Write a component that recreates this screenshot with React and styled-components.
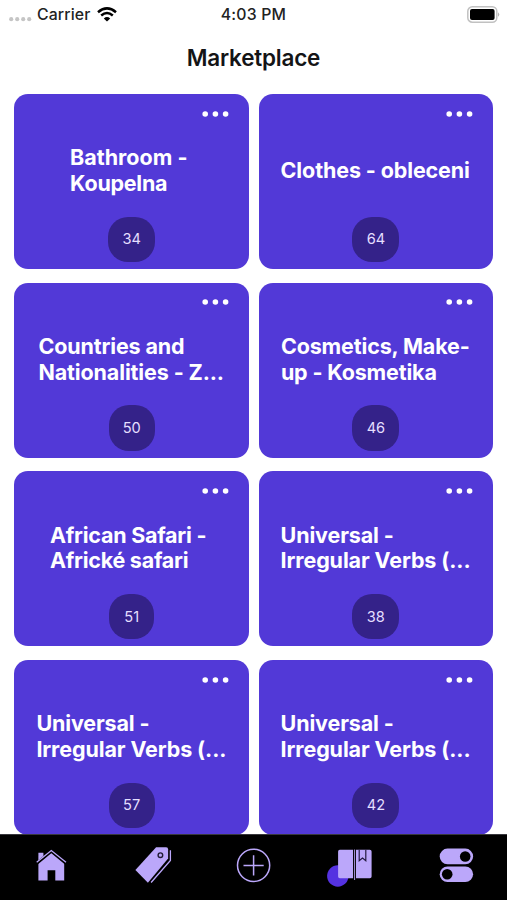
import React from "react";
import styled, { createGlobalStyle } from "styled-components";

const GlobalStyle = createGlobalStyle`
  * { box-sizing: border-box; }
  body { margin: 0; background: #fff; }
`;

const Screen = styled.div`
  width: 507px;
  height: 900px;
  overflow: hidden;
  display: flex;
  flex-direction: column;
  background: #fff;
  font-family: Inter, "Liberation Sans", sans-serif;
`;

const StatusBar = styled.div`
  height: 29px;
  flex: none;
  display: grid;
  grid-template-columns: 1fr auto 1fr;
  align-items: center;
  padding: 0 7px 1px 9px;
  color: #222;
  font-size: 16px;
  line-height: 20px;
`;

const Carrier = styled.div`
  display: flex;
  align-items: center;
  svg { display: block; }
  svg:first-child { transform: translateY(1px); }
  span { margin: 2px 7px 0 5px; font-weight: 500; font-size: 15.8px; letter-spacing: 0.12px; }
`;

const Clock = styled.span`
  margin-top: 2px;
  font-weight: 500;
  font-size: 15.8px;
  letter-spacing: 0.2px;
  transform: translateX(-1px);
`;

const BatteryIcon = styled.svg`
  display: block;
  justify-self: end;
`;

const Header = styled.h1`
  flex: none;
  height: 65px;
  margin: 0;
  padding-top: 14px;
  text-align: center;
  font-size: 22.5px;
  font-weight: 600;
  line-height: 30px;
  letter-spacing: -0.22px;
  color: #141416;
`;

const Grid = styled.main`
  flex: none;
  height: 740px;
  overflow: hidden;
  display: grid;
  grid-template-columns: 234.6px 234.6px;
  grid-auto-rows: 175px;
  gap: 13.7px 9.6px;
  padding-left: 14.4px;
  align-content: start;
`;

const Card = styled.article`
  display: grid;
  grid-template-rows: 39px 76px auto;
  border-radius: 14px;
  background: #5239d7;
  color: #fff;
`;

const MoreButton = styled.div`
  display: flex;
  justify-content: flex-end;
  padding: 16.6px 20px 0 0;
  svg { display: block; }
`;

const Title = styled.h2`
  margin: 0;
  padding-left: ${(p) => p.$indent}px;
  display: flex;
  flex-direction: column;
  justify-content: center;
  font-size: 21.5px;
  font-weight: 700;
  line-height: 25.6px;
  white-space: nowrap;
`;

const Line = styled.span`
  letter-spacing: ${(p) => p.$tracking}px;
`;

const Count = styled.div`
  justify-self: center;
  margin-top: 7.6px;
  width: ${(p) => p.$width}px;
  height: 45.4px;
  border-radius: 20px;
  display: flex;
  align-items: center;
  justify-content: center;
  background: #342289;
  color: #e5dfff;
  font-size: 14.6px;
`;

const TabBar = styled.nav`
  flex: 1;
  display: grid;
  grid-template-columns: repeat(5, 1fr);
  border-top: 1px solid #38373d;
  background: #000;
`;

const Tab = styled.div`
  display: flex;
  justify-content: center;
  svg { display: block; width: 101px; height: 64px; }
`;

const universal = { lines: [["Universal -", -0.14], ["Irregular Verbs (...", -0.11]], indent: 22 };

const cards = [
  { lines: [["Bathroom -", 0], ["Koupelna", -0.25]], indent: 55.7, count: 34, width: 47 },
  { lines: [["Clothes - obleceni", -0.12]], indent: 22, count: 64, width: 47 },
  { lines: [["Countries and", -0.14], ["Nationalities - Z...", -0.12]], indent: 24, count: 50, width: 46 },
  { lines: [["Cosmetics, Make-", -0.14], ["up - Kosmetika", -0.16]], indent: 22.3, count: 46, width: 47 },
  { lines: [["African Safari -", -0.24], ["Africké safari", -0.24]], indent: 35.7, count: 51, width: 44.5 },
  { ...universal, count: 38, width: 47 },
  { ...universal, count: 57, width: 46 },
  { ...universal, count: 42, width: 47 },
];

const LILAC = "#bba7fa";

function DeckCard({ lines, indent, count, width }) {
  return (
    <Card>
      <MoreButton>
        <svg width="27" height="6" viewBox="0 0 27 6" fill="#fff">
          <circle cx="3.2" cy="3" r="2.8" /><circle cx="13.4" cy="3" r="2.8" /><circle cx="23.6" cy="3" r="2.8" />
        </svg>
      </MoreButton>
      <Title $indent={indent}>
        {lines.map(([text, tracking]) => <Line key={text} $tracking={tracking}>{text}</Line>)}
      </Title>
      <Count $width={width}>{count}</Count>
    </Card>
  );
}

function Status() {
  return (
    <StatusBar>
      <Carrier>
        <svg width="23" height="20" viewBox="0 0 23 20" fill="#c5c5c5">
          <circle cx="2.2" cy="14.2" r="2.1" /><circle cx="8.2" cy="14.2" r="2.1" />
          <circle cx="14.2" cy="14.2" r="2.1" /><circle cx="20.2" cy="14.2" r="2.1" />
        </svg>
        <span>Carrier</span>
        <svg width="20" height="15" viewBox="0 0 20 15" fill="none" stroke="#000" strokeWidth="2.5">
          <path d="M1 5.2Q10-2.4 19 5.2M4.2 8.5Q10 3.6 15.8 8.5" />
          <path d="M6.8 11.4Q10 8.8 13.2 11.4L10 14.6Z" fill="#000" stroke="none" />
        </svg>
      </Carrier>
      <Clock>4:03 PM</Clock>
      <BatteryIcon width="33" height="17" viewBox="0 0 33 17">
        <rect x=".8" y=".8" width="29" height="15.4" rx="4.5" fill="#fff" stroke="#c1c1c1" strokeWidth="1.5" />
        <rect x="3" y="3" width="24.6" height="11" rx="2" fill="#000" />
        <path d="M31 6.2Q33.5 8.5 31 10.8Z" fill="#b4b4b4" />
      </BatteryIcon>
    </StatusBar>
  );
}

function Tabs() {
  return (
    <TabBar>
      <Tab>
        <svg viewBox="0 835 101 64" fill={LILAC}>
          <path d="M38.4 862.5 51.3 852.6 64.2 862.5V880.6H55.3V870.2H47.6V880.6H38.4Z" />
          <path d="M36.8 864 51.3 852.2 65.9 864" fill="none" stroke="#000" strokeWidth="1.7" />
          <path d="M38.4 852.7h5v3.4L38.4 860.2Z" />
          <path d="M36.7 862.2 51.3 850.6 66 862.2" fill="none" stroke={LILAC} strokeWidth="1.3" />
        </svg>
      </Tab>
      <Tab>
        <svg viewBox="101.4 835 101 64" fill={LILAC}>
          <path d="M155.5 847.3H165.6Q167.5 847.3 167.5 849.2V858.5L147.3 882.8 134.8 870Z" />
          <path d="M169.8 850.3V860.5L150.5 882.5" fill="none" stroke={LILAC} strokeWidth="1.3" />
          <circle cx="159.8" cy="855.2" r="2.3" stroke="#211b35" strokeWidth="1.4" />
        </svg>
      </Tab>
      <Tab>
        <svg viewBox="202.8 835 101 64" fill="none" stroke={LILAC} strokeWidth="1.5">
          <circle cx="253.4" cy="865.3" r="16.1" />
          <path d="M253.4 855.3V875.5M243.3 865.4H263.5" />
        </svg>
      </Tab>
      <Tab>
        <svg viewBox="304.2 835 101 64">
          <circle cx="338" cy="876" r="10.7" fill="#5532e1" />
          <path d="M340 849.7H353.5V878.2H340Q338.3 878.2 338.3 876.5V851.4Q338.3 849.7 340 849.7ZM356 849.7H370Q371.8 849.7 371.8 851.4V876.5Q371.8 878.2 370 878.2H356Z" fill={LILAC} />
          <path d="M354.8 849.2V880" stroke="#000" strokeWidth="2.8" />
          <path d="M354.8 849.5V880" stroke={LILAC} strokeWidth=".9" />
          <path d="M359.4 849.7V860.8L362.7 858.1 366 860.8V849.7" fill="none" stroke="#241b40" strokeWidth="1.2" />
        </svg>
      </Tab>
      <Tab>
        <svg viewBox="405.6 835 101 64">
          <rect x="439.3" y="848.6" width="33.4" height="15.6" rx="7.8" fill={LILAC} />
          <rect x="439.3" y="866.4" width="33.4" height="15.6" rx="7.8" fill={LILAC} />
          <circle cx="464.8" cy="856.5" r="5.3" /><circle cx="446.8" cy="874.2" r="5.3" />
        </svg>
      </Tab>
    </TabBar>
  );
}

export default function App() {
  return (
    <>
      <GlobalStyle />
      <Screen>
        <Status />
        <Header>Marketplace</Header>
        <Grid>{cards.map((card, i) => <DeckCard key={i} {...card} />)}</Grid>
        <Tabs />
      </Screen>
    </>
  );
}
